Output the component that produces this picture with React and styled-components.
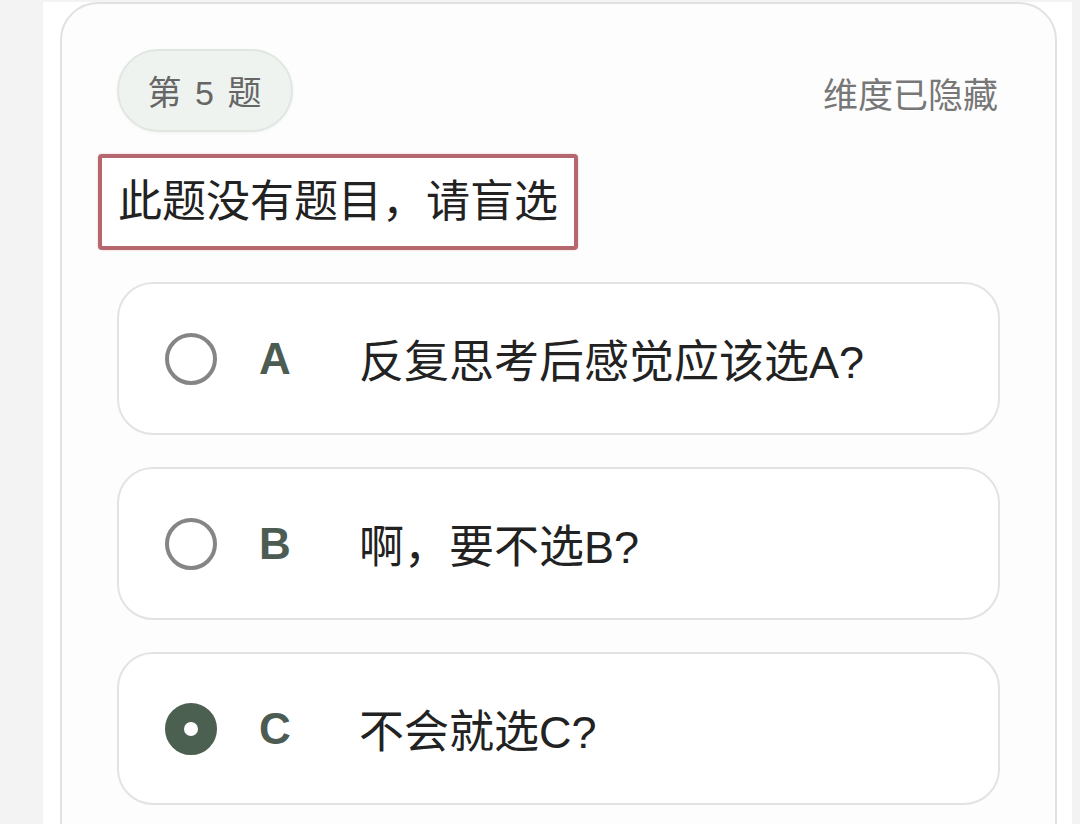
import React from 'react';
import styled, { createGlobalStyle } from 'styled-components';

const GlobalStyle = createGlobalStyle`
  html, body {
    margin: 0;
    padding: 0;
    background: #f3f3f3;
    font-family: "Liberation Sans", "Noto Sans CJK SC", sans-serif;
  }
`;

const options = [
  { key: 'A', text: '反复思考后感觉应该选A?' },
  { key: 'B', text: '啊，要不选B?' },
  { key: 'C', text: '不会就选C?', checked: true },
];

const App = () => {
  return (
    <>
      <GlobalStyle />
      <Page>
        <QuestionCard>
          <Header>
            <NumberBadge>第 5 题</NumberBadge>
            <HiddenHint>维度已隐藏</HiddenHint>
          </Header>
          <Prompt>此题没有题目，请盲选</Prompt>
          <OptionList>
            {options.map(opt => (
              <Option key={opt.key}>
                <Radio $checked={opt.checked} />
                <Letter>{opt.key}</Letter>
                <OptionText>{opt.text}</OptionText>
              </Option>
            ))}
          </OptionList>
        </QuestionCard>
      </Page>
    </>
  );
};

const Page = styled.div`
  margin: 2px 0 0 43px;
  width: 1029px;
  min-height: 822px;
  box-sizing: border-box;
  padding: 0 15px 0 17px;
  background: #ffffff;
  overflow: hidden;
`;

const QuestionCard = styled.div`
  box-sizing: border-box;
  min-height: 900px;
  padding: 45px 55px 40px;
  border: 2px solid #e1e1e1;
  border-radius: 38px;
  background: #fdfdfd;
`;

const Header = styled.div`
  display: flex;
  align-items: center;
  justify-content: space-between;
`;

const NumberBadge = styled.div`
  box-sizing: border-box;
  width: 176px;
  height: 83px;
  display: flex;
  align-items: center;
  justify-content: center;
  border-radius: 42px;
  background: #eef3ef;
  border: 2px solid #e0e7e1;
  box-shadow: 0 1px 3px rgba(0, 0, 0, 0.05);
  color: #666;
  font-size: 34px;
  letter-spacing: 1px;
  word-spacing: 2px;
`;

const HiddenHint = styled.div`
  color: #777;
  font-size: 35px;
  margin-top: 4px;
  margin-right: 2px;
`;

const Prompt = styled.div`
  display: inline-block;
  box-sizing: border-box;
  margin: 22px 0 0 -19px;
  padding: 0 16px;
  height: 96px;
  line-height: 88px;
  border: 4px solid #b5676e;
  border-radius: 4px;
  background: #fff;
  color: #222;
  font-size: 44px;
  box-shadow: 0 0 2px rgba(150, 60, 70, 0.3);
`;

const OptionList = styled.div`
  display: flex;
  flex-direction: column;
  gap: 32px;
  margin-top: 32px;
`;

const Option = styled.div`
  box-sizing: border-box;
  height: 153px;
  display: flex;
  align-items: center;
  padding-left: 46px;
  border: 2px solid #e3e3e3;
  border-radius: 36px;
  background: #fff;
`;

const Radio = styled.span`
  box-sizing: border-box;
  flex: none;
  width: 52px;
  height: 52px;
  border-radius: 50%;
  border: ${p => (p.$checked ? '19px solid #4c6051' : '4px solid #858585')};
  background: #fff;
`;

const Letter = styled.span`
  flex: none;
  width: 100px;
  margin-left: 42px;
  color: #4d5c52;
  font-weight: bold;
  font-size: 44px;
`;

const OptionText = styled.span`
  color: #222;
  font-size: 45px;
`;

export default App;
